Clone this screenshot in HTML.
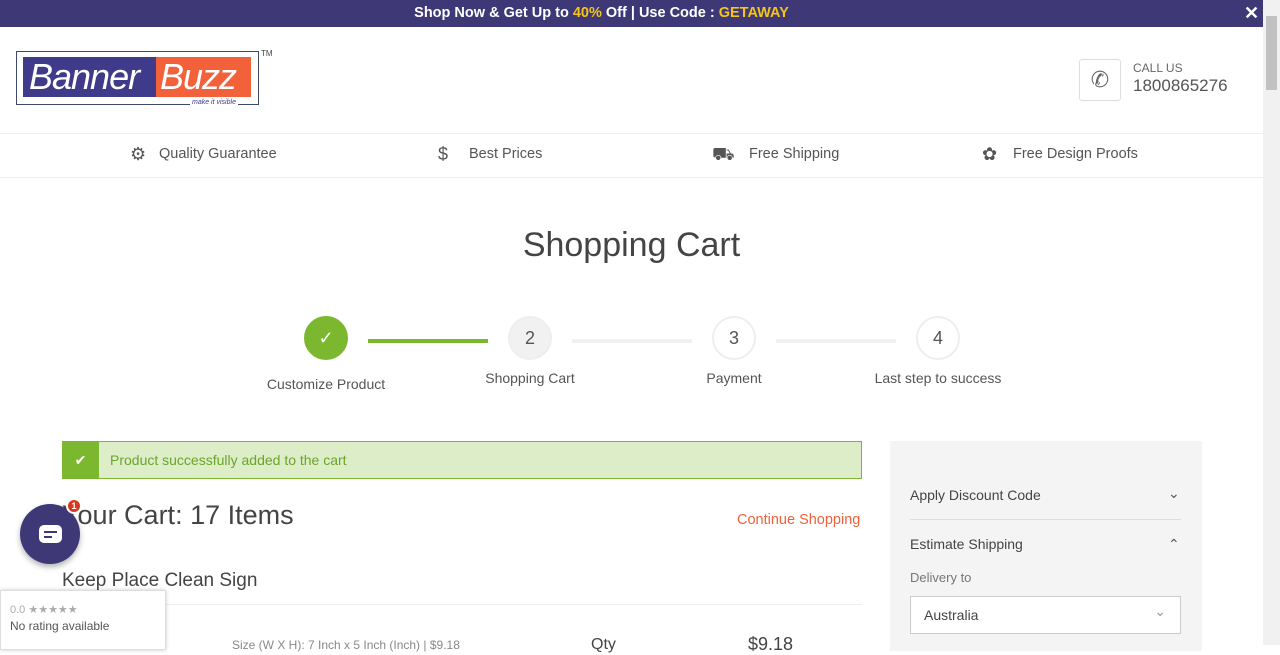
<!DOCTYPE html>
<html><head><meta charset="utf-8"><style>
*{box-sizing:border-box;margin:0;padding:0}
body{width:1280px;height:645px;overflow:hidden;background:#fff;font-family:"Liberation Sans",sans-serif;color:#444;position:relative}
.top{position:absolute;left:0;top:0;width:1263px;height:27px;background:#3f3877;color:#fff;font-weight:bold;font-size:14.5px;text-align:center;line-height:27px;padding-right:60px}
.top b{color:#f5c518}
.sb{position:absolute;right:0;top:0;width:17px;height:645px;background:#f1f1f1}
.sb i{position:absolute;left:3px;top:16px;width:11px;height:74px;background:#c1c1c1}
.abs{position:absolute}
.feat{position:absolute;top:133px;left:0;width:1263px;height:45px;border-top:1px solid #eee;border-bottom:1px solid #eee}
.feat span{position:absolute;top:12px;font-size:14.5px;color:#555}
.step{position:absolute;width:44px;height:44px;border-radius:50%;border:2px solid #eee;background:#fff;font-size:18px;text-align:center;line-height:40px;color:#555;top:316px}
.lbl{position:absolute;font-size:14px;color:#555;text-align:center;width:160px}
.bar{position:absolute;top:339px;height:4px;width:120px;background:#f1f1f1}
</style></head><body>
<div class="top">Shop Now &amp; Get Up to <b>40%</b> Off | Use Code : <b>GETAWAY</b></div>
<div class="abs" style="left:1244px;top:3px;color:#fff;font-size:18px;font-weight:bold">✕</div>
<div class="sb"><i></i></div>
<div class="abs" style="left:16px;top:51px;width:243px;height:54px;border:1px solid #3f4a6a"></div>
<div class="abs" style="left:23px;top:57px;width:136px;height:40px;background:#3f3a8a;color:#fff;font-style:italic;font-size:36px;line-height:40px;padding-left:6px;letter-spacing:-1px">Banner</div>
<div class="abs" style="left:156px;top:57px;width:95px;height:40px;background:#f2613a;color:#fff;font-style:italic;font-size:36px;line-height:40px;padding-left:4px;letter-spacing:-1px">Buzz</div>
<div class="abs" style="left:190px;top:99px;background:#fff;font-size:7px;font-style:italic;color:#3f3a8a;padding:0 2px">make it visible</div>
<div class="abs" style="left:261px;top:49px;font-size:8px">TM</div>
<div class="abs" style="left:1079px;top:59px;width:42px;height:42px;border:1px solid #ddd;border-radius:3px;text-align:center;line-height:40px;font-size:22px;color:#666">✆</div>
<div class="abs" style="left:1133px;top:61px;font-size:12px;color:#666">CALL US</div>
<div class="abs" style="left:1133px;top:76px;font-size:17px;color:#555">1800865276</div>
<div class="feat">
<span style="left:130px;top:10px;font-size:18px">⚙</span><span style="left:159px">Quality Guarantee</span>
<span style="left:438px;top:10px;font-size:18px">$</span><span style="left:469px">Best Prices</span>
<span style="left:712px;top:10px;font-size:18px">⛟</span><span style="left:749px">Free Shipping</span>
<span style="left:982px;top:10px;font-size:18px">✿</span><span style="left:1013px">Free Design Proofs</span>
</div>
<div class="abs" style="left:0;width:1263px;top:226px;text-align:center;font-size:34px;color:#444">Shopping Cart</div>
<div class="step" style="left:304px;background:#7cb82f;border-color:#7cb82f;color:#fff">✓</div>
<div class="bar" style="left:368px;background:#7cb82f"></div>
<div class="step" style="left:508px;background:#f1f1f1">2</div>
<div class="bar" style="left:572px"></div>
<div class="step" style="left:712px">3</div>
<div class="bar" style="left:776px"></div>
<div class="step" style="left:916px">4</div>
<div class="lbl" style="left:246px;top:376px">Customize Product</div>
<div class="lbl" style="left:450px;top:370px">Shopping Cart</div>
<div class="lbl" style="left:654px;top:370px">Payment</div>
<div class="lbl" style="left:858px;top:370px">Last step to success</div>
<div class="abs" style="left:62px;top:441px;width:800px;height:38px;background:#dcedc8;border:1px solid #7cb82f"></div>
<div class="abs" style="left:62px;top:441px;width:37px;height:38px;background:#7cb82f;color:#fff;text-align:center;line-height:38px;font-size:14px">✔</div>
<div class="abs" style="left:110px;top:452px;font-size:14px;color:#6aa52a">Product successfully added to the cart</div>
<div class="abs" style="left:62px;top:500px;font-size:27px;color:#444">Your Cart: 17 Items</div>
<div class="abs" style="left:737px;top:512px;font-size:14.5px;color:#f2613a">Continue Shopping</div>
<div class="abs" style="left:62px;top:570px;font-size:19px;color:#444">Keep Place Clean Sign</div>
<div class="abs" style="left:62px;top:604px;width:800px;border-top:1px solid #eee"></div>
<div class="abs" style="left:232px;top:638px;font-size:12px;color:#888">Size (W X H): 7 Inch x 5 Inch (Inch) | $9.18</div>
<div class="abs" style="left:591px;top:636px;font-size:16px;color:#444">Qty</div>
<div class="abs" style="left:748px;top:634px;font-size:18px;color:#444">$9.18</div>
<div class="abs" style="left:890px;top:441px;width:312px;height:210px;background:#f4f4f4"></div>
<div class="abs" style="left:910px;top:487px;font-size:14px;color:#444">Apply Discount Code</div>
<div class="abs" style="left:1168px;top:485px;font-size:14px;color:#555">⌄</div>
<div class="abs" style="left:910px;top:519px;width:271px;border-top:1px solid #ddd"></div>
<div class="abs" style="left:910px;top:536px;font-size:14px;color:#444">Estimate Shipping</div>
<div class="abs" style="left:1168px;top:536px;font-size:14px;color:#555">⌃</div>
<div class="abs" style="left:910px;top:570px;font-size:13px;color:#777">Delivery to</div>
<div class="abs" style="left:910px;top:596px;width:271px;height:38px;background:#fff;border:1px solid #ccc;font-size:14px;padding:10px 13px;color:#444">Australia<span style="position:absolute;right:14px;top:6px;color:#999">⌄</span></div>
<div class="abs" style="left:0;top:590px;width:166px;height:60px;background:#fff;border:1px solid #ddd;box-shadow:0 0 4px rgba(0,0,0,.2)"></div>
<div class="abs" style="left:10px;top:603px;font-size:11px;color:#aaa">0.0 ★★★★★</div>
<div class="abs" style="left:10px;top:619px;font-size:12px;color:#555">No rating available</div>
<div class="abs" style="left:20px;top:504px;width:60px;height:60px;border-radius:50%;background:#3f3877;box-shadow:0 3px 6px rgba(0,0,0,.3)"></div>
<div class="abs" style="left:39px;top:525px;width:23px;height:18px;background:#fff;border-radius:5px"></div>
<div class="abs" style="left:44px;top:531px;width:13px;height:2px;background:#3f3877"></div>
<div class="abs" style="left:44px;top:536px;width:8px;height:2px;background:#3f3877"></div>
<div class="abs" style="left:66px;top:498px;width:16px;height:16px;border-radius:50%;background:#d8381f;border:2px solid #fff;color:#fff;font-size:9px;font-weight:bold;text-align:center;line-height:12px">1</div>
</body></html>
